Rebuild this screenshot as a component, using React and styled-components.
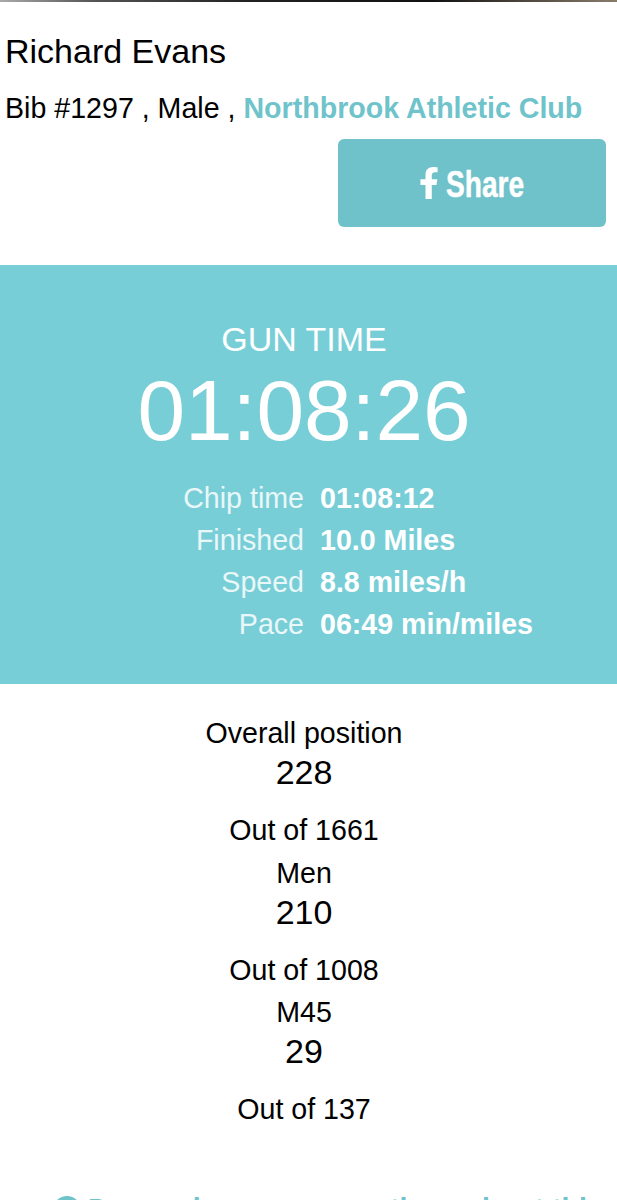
import React from "react";
import styled, { createGlobalStyle } from "styled-components";
import { FaFacebookF } from "react-icons/fa";

const GlobalStyle = createGlobalStyle`
  html, body {
    margin: 0;
    padding: 0;
    background: #fff;
    font-family: "Liberation Sans", Arial, sans-serif;
    color: #000;
  }
`;

const Page = styled.div`
  width: 617px;
  height: 1200px;
  overflow: hidden;
`;

const TopStrip = styled.div`
  height: 2px;
  background: linear-gradient(90deg, #aaa 0, #555 15%, #222 40%, #111 70%, #8a7c6a 100%);
`;

const Athlete = styled.div`
  padding: 28px 11px 0 5px;
`;

const Name = styled.div`
  font-size: 34px;
  line-height: 42px;
`;

const Meta = styled.div`
  margin-top: 19px;
  font-size: 28.6px;
  line-height: 34px;
  white-space: nowrap;
`;

const Club = styled.span`
  color: #6fc3cb;
  font-weight: 700;
`;

const ShareRow = styled.div`
  display: flex;
  justify-content: flex-end;
  margin-top: 14px;
`;

const ShareButton = styled.div`
  width: 268px;
  height: 88px;
  display: flex;
  align-items: center;
  justify-content: center;
  background: #70c2ca;
  border-radius: 6px;
  color: #fff;
`;

const ShareLabel = styled.span`
  display: block;
  width: 85px;
  margin-left: 1px;
  padding-top: 4px;
  font-weight: 700;
  font-size: 36px;
  line-height: 36px;
  -webkit-text-stroke: 0.5px #fff;
  transform: scaleX(0.78);
  transform-origin: left center;
`;

const Hero = styled.div`
  margin-top: 38px;
  height: 419px;
  background: #78ced7;
  color: #fff;
  display: flex;
  flex-direction: column;
  align-items: center;
  box-sizing: border-box;
  padding: 54px 9px 0 0;
`;

const HeroLabel = styled.div`
  font-size: 34px;
  line-height: 40px;
`;

const HeroTime = styled.div`
  font-size: 85.6px;
  line-height: 86px;
  margin-top: 9px;
`;

const Splits = styled.div`
  margin-top: 23px;
  display: grid;
  grid-template-columns: 304px 304px;
  grid-auto-rows: 42px;
  align-items: center;
`;

const SplitLabel = styled.div`
  text-align: right;
  font-size: 28.6px;
  color: #e9f7f8;
`;

const SplitValue = styled.div`
  padding-left: 16px;
  font-size: 28.6px;
  font-weight: 700;
  white-space: nowrap;
`;

const Positions = styled.div`
  margin-top: 29px;
  padding-right: 9px;
  display: flex;
  flex-direction: column;
  align-items: center;
`;

const PositionBlock = styled.div`
  display: flex;
  flex-direction: column;
  align-items: center;
`;

const PositionLabel = styled.div`
  font-size: 28.6px;
  line-height: 40px;
`;

const PositionValue = styled.div`
  font-size: 34px;
  line-height: 39px;
`;

const PositionOut = styled.div`
  margin-top: 18px;
  margin-bottom: 2.5px;
  font-size: 28.6px;
  line-height: 40px;
`;

const Question = styled.div`
  margin-top: 57px;
  padding-left: 53px;
  display: flex;
  align-items: flex-start;
  gap: 7px;
  color: #6fc3cb;
  font-weight: 700;
  font-size: 28.6px;
  line-height: 40px;
  white-space: nowrap;
`;

const QuestionIcon = styled.span`
  width: 28px;
  height: 28px;
  margin-top: 7px;
  border-radius: 50%;
  background: #6fc3cb;
  flex: none;
`;

const splits = [
  ["Chip time", "01:08:12"],
  ["Finished", "10.0 Miles"],
  ["Speed", "8.8 miles/h"],
  ["Pace", "06:49 min/miles"],
];

const positions = [
  ["Overall position", "228", "Out of 1661"],
  ["Men", "210", "Out of 1008"],
  ["M45", "29", "Out of 137"],
];

export default function App() {
  return (
    <Page>
      <GlobalStyle />
      <TopStrip />
      <Athlete>
        <Name>Richard Evans</Name>
        <Meta>
          Bib #1297 , Male , <Club>Northbrook Athletic Club</Club>
        </Meta>
        <ShareRow>
          <ShareButton>
            <FaFacebookF size={32} />
            <ShareLabel>Share</ShareLabel>
          </ShareButton>
        </ShareRow>
      </Athlete>
      <Hero>
        <HeroLabel>GUN TIME</HeroLabel>
        <HeroTime>01:08:26</HeroTime>
        <Splits>
          {splits.map(([label, value]) => (
            <React.Fragment key={label}>
              <SplitLabel>{label}</SplitLabel>
              <SplitValue>{value}</SplitValue>
            </React.Fragment>
          ))}
        </Splits>
      </Hero>
      <Positions>
        {positions.map(([label, value, out]) => (
          <PositionBlock key={label}>
            <PositionLabel>{label}</PositionLabel>
            <PositionValue>{value}</PositionValue>
            <PositionOut>{out}</PositionOut>
          </PositionBlock>
        ))}
      </Positions>
      <Question>
        <QuestionIcon />
        Do you have any questions about this
      </Question>
    </Page>
  );
}
